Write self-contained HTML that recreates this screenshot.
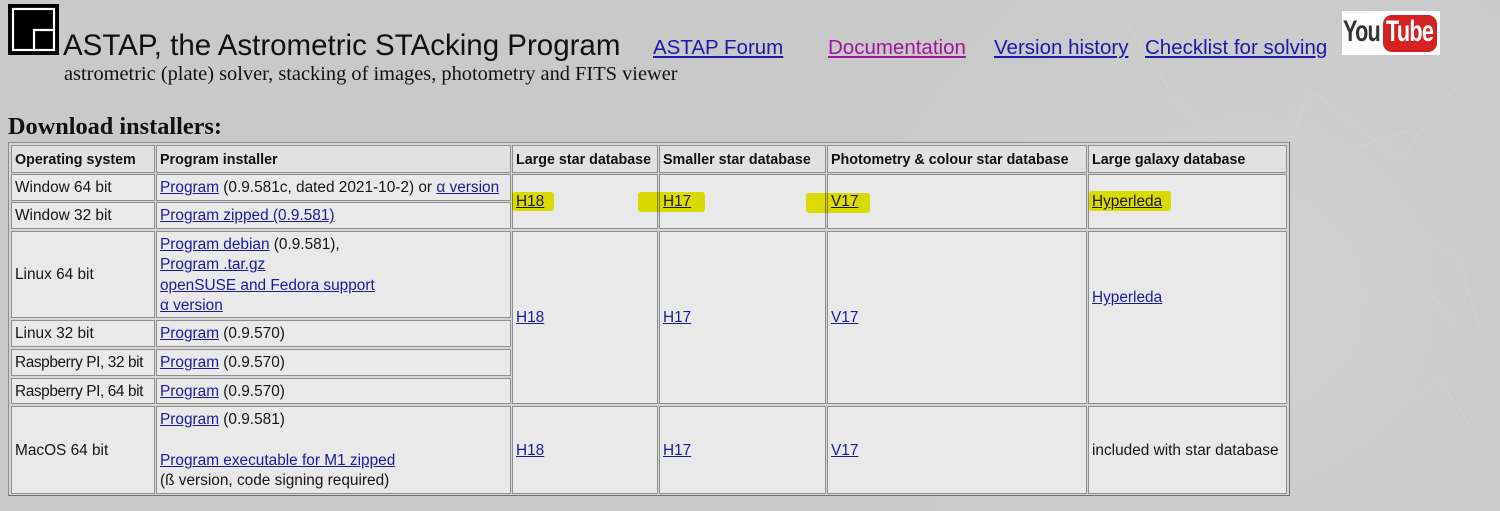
<!DOCTYPE html>
<html><head><meta charset="utf-8">
<style>
html,body{margin:0;padding:0;}
body{width:1500px;height:511px;overflow:hidden;position:relative;background:#cdcdcd;font-family:"Liberation Sans",Arial,sans-serif;}
.bg{position:absolute;inset:0;background:
radial-gradient(circle at 1250px 300px,#d1d1d1 0,#c9c9c9 400px),#cdcdcd;}
.abs{position:absolute;white-space:nowrap;}
a{color:#1c1a9c;text-decoration:underline;}
.hl{position:absolute;background:#eef000;mix-blend-mode:multiply;border-radius:3px;}
.tbl{position:absolute;left:8px;top:142px;width:1280px;height:352px;border:1px solid #8c8c8c;border-right-color:#6e6e6e;border-bottom-color:#6e6e6e;background:#d6d6d6;}
.c{position:absolute;box-sizing:border-box;border:1px solid #8e8e8e;background:#e9e9e9;display:flex;align-items:center;padding-left:3px;padding-top:2px;font-size:15.4px;line-height:20.4px;color:#151515;white-space:nowrap;}
.h{background:#e1e1e1;font-weight:bold;color:#111;font-size:14.3px;}
</style></head><body>
<div class="bg"></div>
<svg class="abs" style="left:0;top:0" width="1500" height="511">
<g stroke="#d6d6d6" stroke-width="1" fill="none" opacity=".6">
<path d="M1125 20 L1176 100 L1270 200 L1310 90 L1400 160 L1460 80 M1290 110 L1350 150 L1410 130 M1400 220 L1460 260 L1480 330 M1370 300 L1420 280 L1460 330 M1380 420 L1440 380 L1480 440"/>
</g>
</svg>
<!-- logo -->
<div class="abs" style="left:8px;top:4px;width:51px;height:51px;background:#000;"></div>
<svg class="abs" style="left:8px;top:4px" width="51" height="51"><rect x="5" y="5" width="41" height="41" fill="none" stroke="#fff" stroke-width="2.2"/><path d="M26 46 V26 H46" fill="none" stroke="#fff" stroke-width="2.2"/></svg>
<div class="abs" style="left:63px;top:29px;font-size:29.5px;color:#111;">ASTAP, the Astrometric STAcking Program</div>
<div class="abs" style="left:64px;top:63px;font-family:'Liberation Serif',serif;font-size:20.4px;color:#111;">astrometric (plate) solver, stacking of images, photometry and FITS viewer</div>
<a class="abs" style="left:653px;top:36px;font-size:20.5px;color:#1c1aa8">ASTAP Forum</a>
<a class="abs" style="left:828px;top:36px;font-size:20.5px;color:#a0149e">Documentation</a>
<a class="abs" style="left:994px;top:36px;font-size:20.5px;color:#1c1aa8">Version history</a>
<a class="abs" style="left:1145px;top:36px;font-size:20.5px;color:#1c1aa8">Checklist for solving</a>
<!-- youtube -->
<div class="abs" style="left:1342px;top:11px;width:98px;height:44px;background:#fff;"></div>
<div class="abs" style="left:1383px;top:15px;width:54px;height:37px;background:#d42222;border-radius:9px;"></div>
<div class="abs" style="left:1343px;top:15px;font-size:30px;font-weight:bold;color:#333;letter-spacing:-1px;transform:scaleX(.72);transform-origin:left;">You</div>
<div class="abs" style="left:1386px;top:15px;font-size:30px;font-weight:bold;color:#fff;letter-spacing:-1px;transform:scaleX(.72);transform-origin:left;">Tube</div>
<div class="abs" style="left:8px;top:113px;font-family:'Liberation Serif',serif;font-weight:bold;font-size:24.3px;color:#111;">Download installers:</div>

<div class="tbl"></div>
<!-- header -->
<div class="c h" style="left:11px;top:145px;width:144px;height:28px;">Operating system</div>
<div class="c h" style="left:156px;top:145px;width:355px;height:28px;">Program installer</div>
<div class="c h" style="left:512px;top:145px;width:146px;height:28px;">Large star database</div>
<div class="c h" style="left:659px;top:145px;width:167px;height:28px;">Smaller star database</div>
<div class="c h" style="left:827px;top:145px;width:260px;height:28px;">Photometry &amp; colour star database</div>
<div class="c h" style="left:1088px;top:145px;width:199px;height:28px;">Large galaxy database</div>
<!-- col 0 -->
<div class="c" style="left:11px;top:174px;width:144px;height:27px;">Window 64 bit</div>
<div class="c" style="left:11px;top:202px;width:144px;height:27px;">Window 32 bit</div>
<div class="c" style="left:11px;top:231px;width:144px;height:87px;">Linux 64 bit</div>
<div class="c" style="left:11px;top:320px;width:144px;height:27px;">Linux 32 bit</div>
<div class="c" style="left:11px;top:349px;width:144px;height:27px;letter-spacing:-.4px">Raspberry PI, 32 bit</div>
<div class="c" style="left:11px;top:378px;width:144px;height:26px;letter-spacing:-.4px">Raspberry PI, 64 bit</div>
<div class="c" style="left:11px;top:406px;width:144px;height:88px;">MacOS 64 bit</div>
<!-- col 1 -->
<div class="c" style="left:156px;top:174px;width:355px;height:27px;"><span><a>Program</a> (0.9.581c, dated 2021-10-2) or <a>α version</a></span></div>
<div class="c" style="left:156px;top:202px;width:355px;height:27px;"><a>Program zipped (0.9.581)</a></div>
<div class="c" style="left:156px;top:231px;width:355px;height:87px;"><span><a>Program debian</a> (0.9.581),<br><a>Program .tar.gz</a><br><a>openSUSE and Fedora support</a><br><a>α version</a></span></div>
<div class="c" style="left:156px;top:320px;width:355px;height:27px;"><span><a>Program</a> (0.9.570)</span></div>
<div class="c" style="left:156px;top:349px;width:355px;height:27px;"><span><a>Program</a> (0.9.570)</span></div>
<div class="c" style="left:156px;top:378px;width:355px;height:26px;"><span><a>Program</a> (0.9.570)</span></div>
<div class="c" style="left:156px;top:406px;width:355px;height:88px;"><span><a>Program</a> (0.9.581)<br>&nbsp;<br><a>Program executable for M1 zipped</a><br>(ß version, code signing required)</span></div>
<!-- db cols -->
<div class="c" style="left:512px;top:174px;width:146px;height:55px;"><a>H18</a></div>
<div class="c" style="left:659px;top:174px;width:167px;height:55px;"><a>H17</a></div>
<div class="c" style="left:827px;top:174px;width:260px;height:55px;"><a>V17</a></div>
<div class="c" style="left:1088px;top:174px;width:199px;height:55px;"><a>Hyperleda</a></div>
<div class="c" style="left:512px;top:231px;width:146px;height:173px;"><a>H18</a></div>
<div class="c" style="left:659px;top:231px;width:167px;height:173px;"><a>H17</a></div>
<div class="c" style="left:827px;top:231px;width:260px;height:173px;"><a>V17</a></div>
<div class="c" style="left:1088px;top:231px;width:199px;height:173px;padding-bottom:40px;"><a>Hyperleda</a></div>
<div class="c" style="left:512px;top:406px;width:146px;height:88px;"><a>H18</a></div>
<div class="c" style="left:659px;top:406px;width:167px;height:88px;"><a>H17</a></div>
<div class="c" style="left:827px;top:406px;width:260px;height:88px;"><a>V17</a></div>
<div class="c" style="left:1088px;top:406px;width:199px;height:88px;">included with star database</div>
<!-- highlights -->
<div class="hl" style="left:512px;top:192px;width:42px;height:19px;"></div>
<div class="hl" style="left:638px;top:192px;width:67px;height:20px;"></div>
<div class="hl" style="left:806px;top:193px;width:64px;height:20px;"></div>
<div class="hl" style="left:1089px;top:191px;width:82px;height:20px;"></div>
</body></html>
